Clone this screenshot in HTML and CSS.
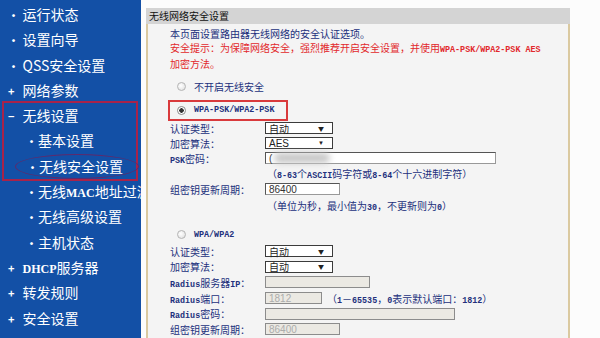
FILE: index.html
```html
<!DOCTYPE html>
<html lang="zh-CN">
<head>
    <meta charset="UTF-8">
    <meta name="viewport" content="width=device-width, initial-scale=1.0">
    <title>无线网络安全设置</title>
    <link rel="stylesheet" href="styles.css">
</head>
<body>
<div class="page">

    <ul class="menu">
        <li class="item"><span class="mark">•</span>运行状态</li>
        <li class="item"><span class="mark">•</span>设置向导</li>
        <li class="item"><span class="mark">•</span>QSS安全设置</li>
        <li class="item"><span class="mark">+</span>网络参数</li>
        <li class="group">
            <div class="item"><span class="mark">−</span>无线设置</div>
            <div class="sub"><span class="mark">•</span>基本设置</div>
            <div class="sub current"><span class="mark">•</span>无线安全设置</div>
        </li>
        <li class="sub"><span class="mark">•</span>无线<span class="en-menu">MAC</span>地址过滤</li>
        <li class="sub"><span class="mark">•</span>无线高级设置</li>
        <li class="sub"><span class="mark">•</span>主机状态</li>
        <li class="item"><span class="mark">+</span><span class="en-menu">DHCP</span>服务器</li>
        <li class="item"><span class="mark">+</span>转发规则</li>
        <li class="item"><span class="mark">+</span>安全设置</li>
    </ul>

    <div class="main">
        <div class="panel">
            <div class="title">无线网络安全设置</div>
            <div class="body">
                <p class="intro">
                    本页面设置路由器无线网络的安全认证选项。<br>
                    <span class="warn">安全提示：为保障网络安全，强烈推荐开启安全设置，并使用<span class="en">WPA-PSK/WPA2-PSK AES</span><br>加密方法。</span>
                </p>

                <div class="opt off"><span class="radio"></span>不开启无线安全</div>
                <div class="opt picked"><span class="radio on"></span><span class="en">WPA-PSK/WPA2-PSK</span></div>

                <div class="form">
                    <div class="row">
                        <span class="label">认证类型：</span>
                        <span class="select">自动<i>▼</i></span>
                    </div>
                    <div class="row">
                        <span class="label">加密算法：</span>
                        <span class="select latin">AES<i>▼</i></span>
                    </div>
                    <div class="row">
                        <span class="label"><span class="en">PSK</span>密码：</span>
                        <span class="input psk">(<span class="blur"></span></span>
                    </div>
                    <div class="row hint">
                        <span class="note">（<span class="en">8-63</span>个<span class="en">ASCII</span>码字符或<span class="en">8-64</span>个十六进制字符）</span>
                    </div>
                    <div class="row">
                        <span class="label">组密钥更新周期：</span>
                        <span class="input short">86400</span>
                    </div>
                    <div class="row hint tall">
                        <span class="note">（单位为秒，最小值为<span class="en">30</span>，不更新则为<span class="en">0</span>）</span>
                    </div>
                </div>

                <div class="opt second"><span class="radio"></span><span class="en">WPA/WPA2</span></div>

                <div class="form wide">
                    <div class="row">
                        <span class="label">认证类型：</span>
                        <span class="select">自动<i>▼</i></span>
                    </div>
                    <div class="row">
                        <span class="label">加密算法：</span>
                        <span class="select">自动<i>▼</i></span>
                    </div>
                    <div class="row">
                        <span class="label"><span class="en">Radius</span>服务器<span class="en">IP</span>：</span>
                        <span class="input off ip"></span>
                    </div>
                    <div class="row">
                        <span class="label"><span class="en">Radius</span>端口：</span>
                        <span class="port">
                            <span class="input off port-box">1812</span>
                            <span class="note">（<span class="en">1</span>－<span class="en">65535</span>，<span class="en">0</span>表示默认端口：<span class="en">1812</span>）</span>
                        </span>
                    </div>
                    <div class="row">
                        <span class="label"><span class="en">Radius</span>密码：</span>
                        <span class="input off pass"></span>
                    </div>
                    <div class="row">
                        <span class="label">组密钥更新周期：</span>
                        <span class="input off short">86400</span>
                    </div>
                </div>
            </div>
        </div>
    </div>

</div>
</body>
</html>
```

FILE: styles.css
```css
* {
    box-sizing: border-box;
}
body {
    margin: 0;
    background: #fcfcfc;
    font-family: "Noto Sans CJK SC", sans-serif;
}
.page {
    display: flex;
    height: 338px;
    overflow: hidden;
}

/* 왼쪽 메뉴 */
.menu {
    width: 141px;
    flex: none;
    margin: 0;
    padding: 2px 0 0;
    list-style: none;
    background: #1350a6;
    color: #fff;
    font-size: 14px;
    white-space: nowrap;
    overflow: hidden;
}
.menu .item,
.menu .sub {
    height: 25.3px;
    line-height: 25.3px;
}
.menu .item {
    padding-left: 8px;
}
.menu .sub {
    padding-left: 26px;
}
.mark {
    display: inline-block;
    width: 14.5px;
    font-size: 11px;
    font-weight: bold;
}
.sub .mark {
    width: 12px;
}
.en-menu {
    font-family: "Liberation Serif", serif;
    font-weight: bold;
    font-size: 12px;
}
.group {
    margin: -2px 3px -2px 2px;
    border: 2px solid #a8234a;
}
.group .item {
    padding-left: 4px;
}
.group .sub {
    padding-left: 22px;
}
.group .current {
    width: 124px;
    margin-left: 11px;
    padding-left: 11px;
    line-height: 22.3px;
    border: 1.5px solid #5e2a6c;
    border-radius: 50%;
}

/* 오른쪽 내용 */
.main {
    flex: 1;
    padding: 8px 0 0 5px;
}
.panel {
    width: 424px;
    height: 100%;
    display: flex;
    flex-direction: column;
}
.title {
    height: 16px;
    line-height: 16px;
    padding-left: 3px;
    background: #d4d4d4;
    color: #111;
    font-size: 10px;
}
.body {
    flex: 1;
    padding: 3px 0 0 22px;
    background: #f4f4f4;
    border-left: 2px solid #dac9a0;
    border-right: 2px solid #dac9a0;
    color: #22307c;
    font-size: 10px;
}
.intro {
    margin: 0;
    line-height: 13.5px;
}
.warn {
    color: #e2282c;
}
.en {
    font-family: "Liberation Mono", monospace;
    font-weight: bold;
    font-size: 8.4px;
}

.opt {
    height: 16px;
    line-height: 16px;
    padding-left: 6.5px;
    display: flex;
    align-items: center;
}
.opt.off {
    margin-top: 8px;
}
.opt.picked {
    width: 120px;
    height: 21px;
    margin: 5px 0 0 -2px;
    padding-left: 6.5px;
    border: 2px solid #d93a3c;
}
.opt.second {
    margin-top: 13px;
}
.radio {
    width: 9px;
    height: 9px;
    margin-right: 8.5px;
    border: 1px solid #b4b4b4;
    border-radius: 50%;
    background: radial-gradient(circle at 40% 40%, #fff, #dcdcdc);
}
.radio.on {
    border-color: #8a8a8a;
    background: radial-gradient(circle, #333 0 2px, #fff 2.5px);
}

.form {
    margin-top: 0;
}
.form.wide {
    margin-top: 1px;
}
.row {
    height: 15px;
    display: grid;
    grid-template-columns: 95px auto;
    align-items: center;
}
.wide .row {
    height: 15.6px;
}
.row.hint {
    height: 16px;
}
.row.tall {
    height: 17px;
}
.hint .note {
    grid-column: 2;
    padding-left: 2px;
}

.select {
    width: 68px;
    height: 12px;
    padding: 0 8px 0 3px;
    display: flex;
    justify-content: space-between;
    align-items: center;
    background: #fff;
    border: 1px solid #3b3b3b;
    color: #222;
    font-size: 10px;
}
.select.latin {
    font-family: "Liberation Sans", sans-serif;
}
.select i {
    font-style: normal;
    font-size: 6px;
}
.input {
    height: 12px;
    padding-left: 3px;
    display: flex;
    align-items: center;
    background: #fff;
    border: 1px solid #555;
    border-right-color: #999;
    border-bottom-color: #999;
    color: #333;
    font-family: "Liberation Sans", sans-serif;
    font-size: 10px;
}
.input.off {
    background: #ebe9e3;
    border-color: #8c8c8c;
    color: #acacac;
}
.psk {
    width: 231px;
}
.blur {
    width: 56px;
    height: 10px;
    margin-left: 2px;
    background: #c8c8c8;
    border-radius: 5px;
    filter: blur(3px);
}
.short {
    width: 75px;
}
.ip {
    width: 105px;
}
.pass {
    width: 190px;
}
.port {
    display: flex;
    align-items: center;
    gap: 5px;
}
.port-box {
    width: 57px;
}
```
